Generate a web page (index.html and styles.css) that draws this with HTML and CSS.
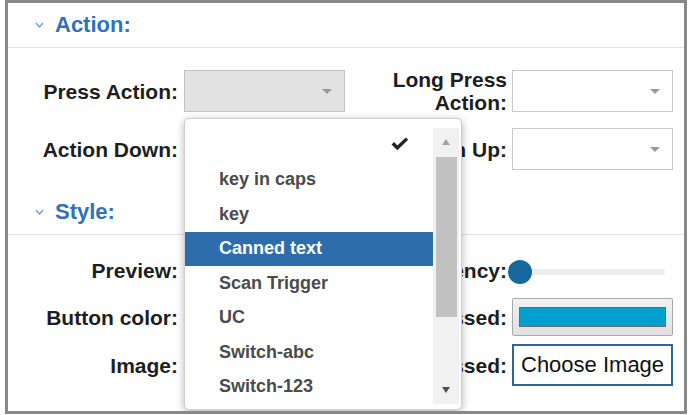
FILE: index.html
```html
<!DOCTYPE html>
<html>
<head>
<meta charset="utf-8">
<link rel="stylesheet" href="styles.css">
</head>
<body>
<div class="frame">
  <section class="section">
    <div class="sec-head">
      <svg class="chev" width="9" height="6" viewBox="0 0 9 6"><polyline points="1,1 4.5,5 8,1" fill="none" stroke="#6a9bd1" stroke-width="1.3"/></svg>
      <span>Action:</span>
    </div>
    <div class="grid action-grid">
      <div class="lbl">Press Action:</div>
      <div class="select disabled"><span class="arrow"></span></div>
      <div class="lbl lbl-r">Long Press<br>Action:</div>
      <div class="select"><span class="arrow"></span></div>
      <div class="lbl">Action Down:</div>
      <div class="select"><span class="arrow"></span></div>
      <div class="lbl lbl-r">Action Up:</div>
      <div class="select"><span class="arrow"></span></div>
    </div>
  </section>
  <section class="section">
    <div class="sec-head">
      <svg class="chev" width="9" height="6" viewBox="0 0 9 6"><polyline points="1,1 4.5,5 8,1" fill="none" stroke="#6a9bd1" stroke-width="1.3"/></svg>
      <span>Style:</span>
    </div>
    <div class="grid style-grid">
      <div class="lbl">Preview:</div>
      <div class="preview"></div>
      <div class="lbl lbl-r">Transparency:</div>
      <div class="range"><div class="track"></div><div class="thumb"></div></div>
      <div class="lbl">Button color:</div>
      <div class="color"><div class="swatch"></div></div>
      <div class="lbl lbl-r">Button color pressed:</div>
      <div class="color"><div class="swatch"></div></div>
      <div class="lbl">Image:</div>
      <div class="choose">Choose Image</div>
      <div class="lbl lbl-r">Image pressed:</div>
      <div class="choose">Choose Image</div>
    </div>
  </section>
  <div class="popup">
    <ul class="list">
      <li class="item item-check"><svg class="check" width="18" height="14" viewBox="0 0 18 14"><path d="M0.5 7.5 L3.2 5 L6.3 8.4 L14.8 0.5 L17.2 2.8 L6.3 13.2 Z" fill="#222"/></svg></li>
      <li class="item">key in caps</li>
      <li class="item">key</li>
      <li class="item selected">Canned text</li>
      <li class="item">Scan Trigger</li>
      <li class="item">UC</li>
      <li class="item">Switch-abc</li>
      <li class="item">Switch-123</li>
    </ul>
    <div class="scrollbar">
      <span class="sb-up"></span>
      <div class="sb-thumb"></div>
      <span class="sb-down"></span>
    </div>
  </div>
</div>
</body>
</html>
```
FILE: styles.css
```css
* { box-sizing: border-box; }
body {
  margin: 0;
  background: #fff;
  font-family: "Liberation Sans", Arial, sans-serif;
  color: #222;
}
.frame {
  position: relative;
  margin-left: 5px;
  width: 682px;
  height: 414px;
  border: 3px solid #888;
  background: #fff;
  overflow: hidden;
}
.sec-head {
  height: 45px;
  display: flex;
  align-items: center;
  padding-left: 27px;
  border-bottom: 1px solid #e2e2e2;
  color: #2f73b9;
  font-weight: bold;
  font-size: 22px;
}
.chev { margin-right: 11px; margin-top: 0; }
.grid {
  display: grid;
  grid-template-columns: 176px 161px 167px 161px;
  align-items: center;
}
.action-grid {
  padding-top: 22px;
  padding-bottom: 20px;
  grid-template-rows: 42px 42px;
  row-gap: 16px;
}
.style-grid {
  padding-top: 15px;
  grid-template-rows: 40px 40px 42px;
  row-gap: 7px;
}
.lbl {
  display: flex;
  justify-content: flex-end;
  white-space: nowrap;
  text-align: right;
  padding-right: 6px;
  font-weight: bold;
  font-size: 21px;
  line-height: 23px;
  color: #1e1e1e;
}
.lbl-r { padding-right: 5px; }
.select {
  position: relative;
  height: 42px;
  border: 1px solid #c9c9c9;
  background: #fff;
}
.select.disabled {
  background: #e2e2e2;
  border-color: #c2c2c2;
}
.arrow {
  position: absolute;
  right: 12px;
  top: 18px;
  border-left: 5px solid transparent;
  border-right: 5px solid transparent;
  border-top: 5px solid #999;
}
.preview { height: 40px; }
.range {
  position: relative;
  height: 24px;
  width: 157px;
  margin-left: -4px;
  margin-top: 4px;
}
.track {
  margin-top: 9px;
  height: 6px;
  border-radius: 3px;
  background: #ededed;
}
.thumb {
  position: absolute;
  left: 0;
  top: 0;
  width: 24px;
  height: 24px;
  border-radius: 50%;
  background: #17689c;
}
.color {
  height: 38px;
  border: 1px solid #a9a9a9;
  border-radius: 2px;
  background: linear-gradient(#f1f1f1, #e0e0e0);
  padding: 8px 6px 8px 6px;
}
.swatch {
  height: 20px;
  border: 1px solid #6b6b6b;
  background: #00a1cf;
}
.choose {
  height: 42px;
  border: 2px solid #2c64a2;
  display: flex;
  align-items: center;
  padding-left: 7px;
  font-size: 22px;
  color: #111;
  white-space: nowrap;
}
.popup {
  position: absolute;
  left: 176px;
  top: 115px;
  width: 278px;
  height: 292px;
  display: flex;
  padding: 9px 2px 6px 0;
  background: #fff;
  border: 1px solid #cfcfcf;
  border-radius: 5px;
  box-shadow: 0 2px 8px rgba(0,0,0,0.3);
}
.list {
  list-style: none;
  margin: 0;
  padding: 0;
  width: 249px;
}
.item {
  height: 34.5px;
  display: flex;
  align-items: center;
  padding-left: 34px;
  font-size: 18px;
  font-weight: bold;
  color: #4b4b4b;
  white-space: nowrap;
}
.item-check { justify-content: flex-end; padding-right: 24px; }
.check { display: block; margin-top: -2px; }
.item.selected {
  background: #2d6dab;
  color: #fff;
}
.scrollbar {
  position: relative;
  width: 26px;
  height: 276px;
  background: #f1f1f1;
  display: flex;
  flex-direction: column;
  align-items: center;
}
.sb-up {
  margin-top: 11px;
  border-left: 4px solid transparent;
  border-right: 4px solid transparent;
  border-bottom: 6px solid #a3a3a3;
}
.sb-thumb {
  margin-top: 12px;
  width: 21px;
  height: 160px;
  background: #c1c1c1;
}
.sb-down {
  margin-top: auto;
  margin-bottom: 11px;
  border-left: 4px solid transparent;
  border-right: 4px solid transparent;
  border-top: 6px solid #505050;
}
```
